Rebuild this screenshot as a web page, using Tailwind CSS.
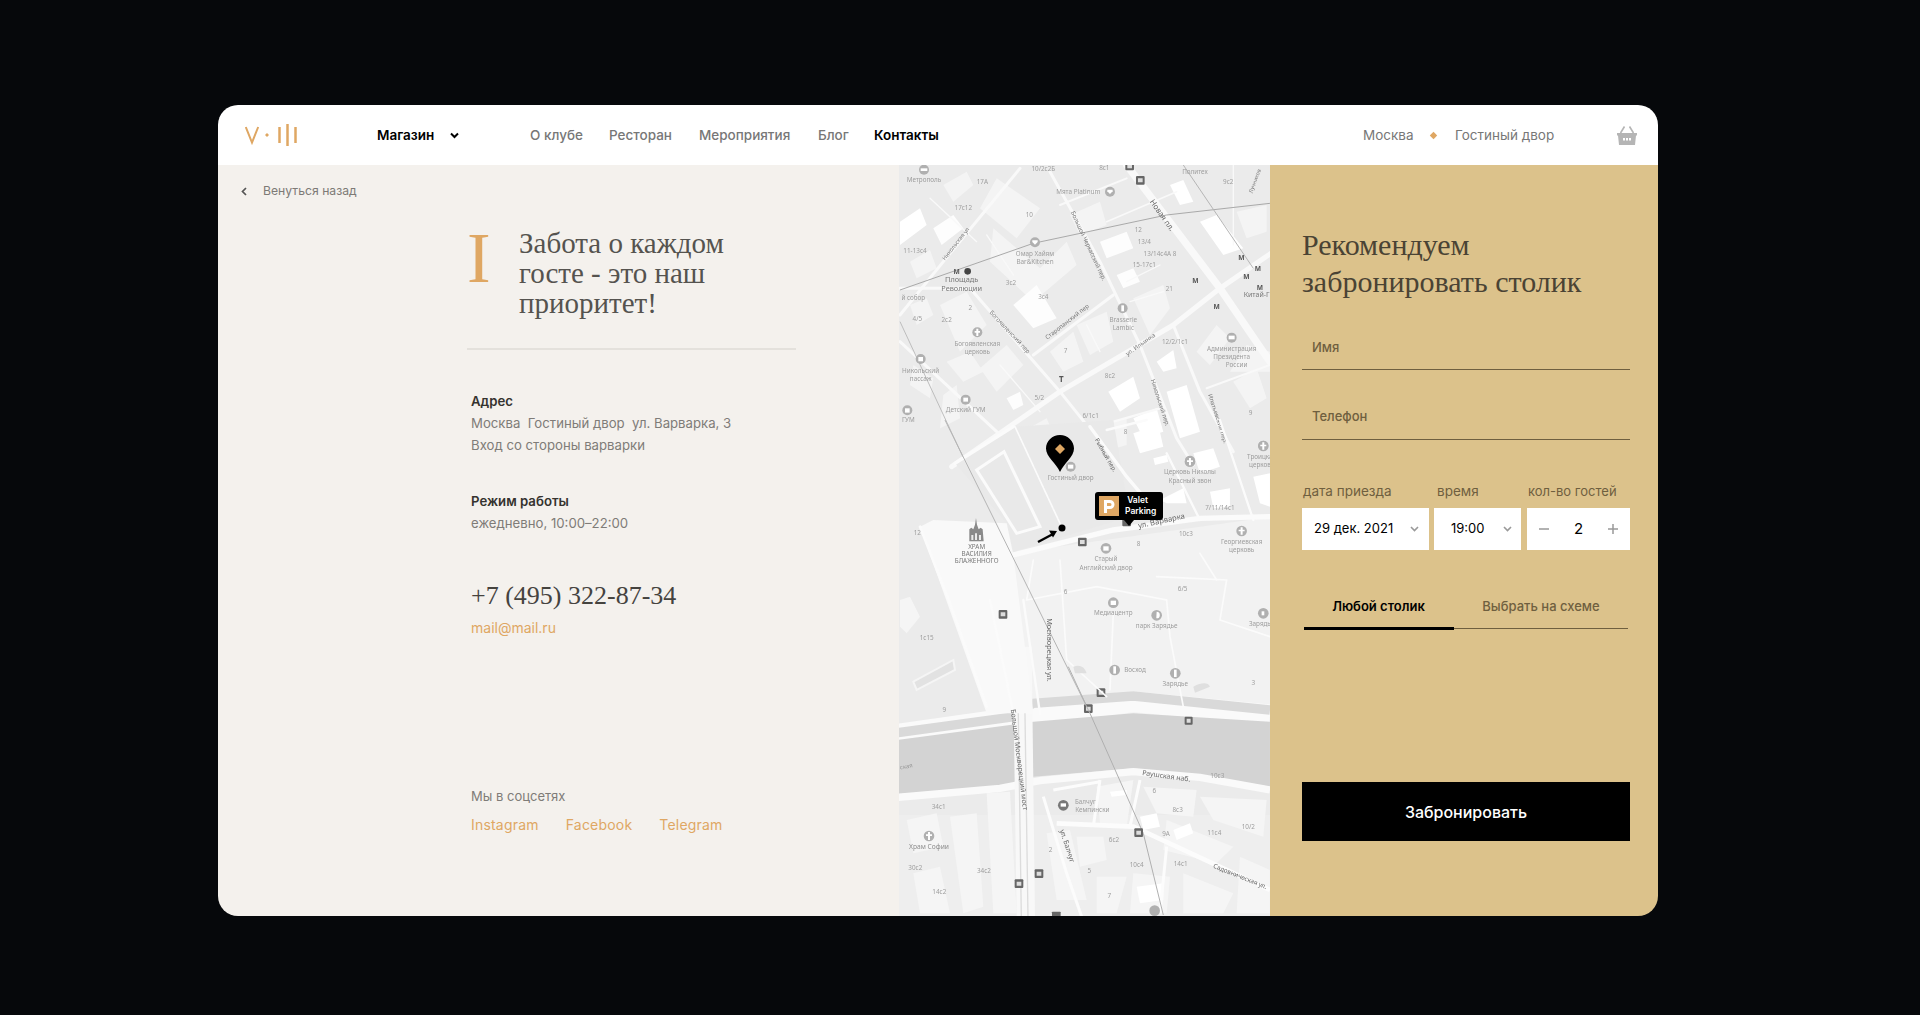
<!DOCTYPE html>
<html lang="ru">
<head>
    <meta charset="UTF-8">
    <meta name="viewport" content="width=device-width, initial-scale=1.0">
    <title>Контакты</title>
    <script src="https://cdn.jsdelivr.net/npm/@tailwindcss/browser@4"></script>
</head>
<body class="bg-[#06080b] min-h-screen overflow-hidden font-['Inter',sans-serif]">
    <div class="w-[1440px] h-[811px] mt-[105px] ml-[218px] rounded-[20px] overflow-hidden flex flex-col">

        <!-- header -->
        <header class="h-[60px] bg-white flex items-center text-[13.5px] text-[#777]">
            <svg class="ml-[27px] w-[54px] h-[22px]" viewBox="0 0 54 22" fill="none" stroke="#dfa763">
                <path d="M.8 3L7 18.500 13.200 3" stroke-width="2"/>
                <path d="M22 9l2 2-2 2-2-2z" fill="#dfa763" stroke="none"/>
                <path d="M34.500 3v16M42.500 0v22M50.500 3v16" stroke-width="2.500"/>
            </svg>
            <a class="ml-[78px] w-[59px] font-semibold text-black whitespace-nowrap">Магазин</a>
            <svg class="ml-[14px] w-[9px] h-[7px]" viewBox="0 0 9 7" fill="none" stroke="#000" stroke-width="2"><path d="M1 1.500l3.500 3.500L8 1.500"/></svg>
            <nav class="ml-[71px] flex gap-[26px] font-medium">
                <a class="w-[53px] whitespace-nowrap">О клубе</a>
                <a class="w-[64px] whitespace-nowrap">Ресторан</a>
                <a class="w-[93px] whitespace-nowrap">Мероприятия</a>
                <a class="w-[30px] whitespace-nowrap">Блог</a>
                <a class="w-[64px] whitespace-nowrap font-semibold text-black">Контакты</a>
            </nav>
            <span class="ml-[425px] w-[49px]">Москва</span>
            <span class="ml-[18px] w-[7px] h-[7px] rotate-45 scale-75 bg-[#dfa763]"></span>
            <span class="ml-[18px] w-[97px] whitespace-nowrap">Гостиный двор</span>
            <svg class="ml-[65px] w-[20px] h-[19px]" viewBox="0 0 20 19" fill="#b5b5b5">
                <path d="M0 7h20v2.500h-1L18 19H2L1 9.500H0z"/>
                <path d="M3.500 7L7.500 .5M16.500 7L12.500 .5" stroke="#b5b5b5" stroke-width="1.600" fill="none"/>
                <path d="M6 12h2v2.500H6zM9 12h2v2.500H9zM12 12h2v2.500h-2z" fill="#fff"/>
            </svg>
        </header>

        <div class="flex-1 flex min-h-0">
            <!-- contacts column -->
            <section class="w-[681px] shrink-0 bg-[#f4f1ed] relative">
                <a class="absolute left-[23px] top-[17px] flex items-center text-[12.2px] text-[#7d7a76]">
                    <svg class="w-[6px] h-[9px] mr-[16px]" viewBox="0 0 6 9" fill="none" stroke="#555" stroke-width="1.700"><path d="M5 1L1.500 4.500 5 8"/></svg>
                    Венуться назад
                </a>

                <div class="ml-[249px] w-[329px] pt-[63px]">
                    <div class="flex h-[122px] border-b-2 border-[#e4e1dc]">
                        <span class="w-[52px] font-['Liberation_Serif',serif] text-[71px] leading-[60px] text-[#dfa763]">I</span>
                        <h1 class="font-['Liberation_Serif',serif] text-[29px] leading-[30px] text-[#55534f]">Забота о каждом<br>госте - это наш<br>приоритет!</h1>
                    </div>
                    <div class="ml-[4px] pt-[40px] text-[13.2px] leading-[22px] text-[#7f7c78]">
                        <h3 class="font-semibold text-[#35332f]">Адрес</h3>
                        <p>Москва&nbsp; Гостиный двор&nbsp; ул. Варварка, 3</p>
                        <p>Вход со стороны варварки</p>
                        <h3 class="mt-[34px] font-semibold text-[#35332f]">Режим работы</h3>
                        <p>ежедневно, 10:00–22:00</p>
                        <p class="mt-[45px] font-['Liberation_Serif',serif] text-[26px] leading-[34px] text-[#45433f]">+7 (495) 322-87-34</p>
                        <a class="block mt-[4px] text-[14px] text-[#dfa763]">mail@mail.ru</a>
                    </div>
                </div>

                <div class="absolute left-[253px] top-[622px] text-[13px] text-[#7f7c78]">
                    <p>Мы в соцсетях</p>
                    <div class="mt-[7px] flex gap-[27px] text-[14px] tracking-[0.2px] text-[#dfa763]">
                        <a>Instagram</a>
                        <a>Facebook</a>
                        <a>Telegram</a>
                    </div>
                </div>
            </section>

            <!-- map -->
            <section class="w-[371px] shrink-0 relative overflow-hidden bg-[#ebebeb]">
                <svg class="absolute inset-0 w-[371px] h-[751px] blur-[0.35px]" viewBox="0 0 371 751" font-family="Noto Sans, sans-serif">
                    <!-- light zones -->
                    <path d="M113 388L371 352V560L130 570z" fill="#f2f2f2"/>
                    <path d="M0 650h371v101H0z" fill="#eeeeee"/>

                    <!-- top part, zoom coords -->
                    <g transform="translate(1,0) scale(.3333)">
                        <g fill="#f4f4f4">
                            <path d="M290 40L420 130 350 220 240 130z"/>
                            <path d="M280 190L420 310 500 230 530 300 400 410 270 290z"/>
                            <path d="M340 420L410 360 470 460 400 490z" fill="#fdfdfd"/>
                            <path d="M120 420L200 380 260 480 180 560z"/>
                            <path d="M140 590L210 560 250 620 190 650z"/>
                            <path d="M240 610L320 540 370 600 290 680z"/>
                            <path d="M320 700L360 680 370 720 340 735z" fill="#fdfdfd"/>
                            <path d="M100 190L160 150 190 190 125 240z" fill="#fdfdfd"/>
                            <path d="M30 290L90 255 110 310 50 340z"/>
                            <path d="M600 230L680 200 700 250 620 280z" fill="#fdfdfd"/>
                            <path d="M650 330L700 310 720 350 670 370z" fill="#fdfdfd"/>
                            <path d="M700 400L790 360 810 430 750 510z"/>
                            <path d="M530 480L620 440 640 530 570 570z"/>
                            <path d="M450 560L520 500 550 590 490 620z"/>
                            <path d="M625 680L700 635 720 700 660 740z" fill="#fff"/>
                            <path d="M770 590L820 555 830 610 790 620z" fill="#fff"/>
                            <path d="M800 680L860 660 900 800 840 820z" fill="#fff"/>
                            <path d="M890 560L950 480 990 520 930 600z"/>
                            <path d="M900 170L950 150 1030 250 970 270z" fill="#fff"/>
                            <path d="M810 60L850 45 880 110 840 120z" fill="#fff"/>
                            <path d="M1000 650L1070 610 1100 700 1050 730z"/>
                            <path d="M700 760L770 730 790 800 730 820z" fill="#fff"/>
                            <path d="M590 780L680 760 680 840 610 860z"/>
                            <path d="M0 170L60 130 80 180 0 240z" fill="#fff"/>
                            <path d="M40 600L100 640 90 700 30 660z"/>
                            <path d="M130 60L200 20 220 60 160 110z"/>
                            <path d="M510 150L600 110 620 180 540 210z"/>
                            <path d="M1010 140L1100 120V200L1040 220z"/>
                            <path d="M990 620L1110 620 1110 560 1040 540z"/>
                            <path d="M350 810L440 760 470 830 370 880z"/>
                            <path d="M30 420L80 400 100 450 50 480z"/>
                            <path d="M130 690L170 660 180 760 120 790z"/>
                        </g>
                        <g fill="none" stroke="#f9f9f9" stroke-width="9" stroke-linecap="round" stroke-linejoin="round">
                            <path d="M155 905L480 680 820 480 960 370 1120 260" stroke-width="15"/>
                            <path d="M0 450L130 290 360 10"/>
                            <path d="M0 370L210 370 480 680 600 830"/>
                            <path d="M450 20L600 290 720 540 830 820 880 900"/>
                            <path d="M680 0L960 370 1110 590" stroke-width="22"/>
                            <path d="M400 570L640 390"/>
                            <path d="M0 530L290 800"/>
                            <path d="M820 480L900 680 1000 860"/>
                            <path d="M480 120L680 40" stroke-width="6"/>
                            <path d="M570 790L780 730" stroke-width="7"/>
                            <path d="M920 670L1110 600" stroke-width="6"/>
                            <path d="M620 170L830 80" stroke-width="5"/>
                            <path d="M260 210L340 330" stroke-width="4"/>
                            <path d="M680 350L780 300" stroke-width="4"/>
                            <path d="M560 480L600 560" stroke-width="4"/>
                            <path d="M690 410L790 380" stroke-width="4"/>
                            <path d="M90 100L230 230" stroke-width="4"/>
                            <path d="M300 600L420 740" stroke-width="4"/>
                            <path d="M1000 0V240" stroke-width="4"/>
                        </g>
                        <path d="M0 375L400 235 800 150 1110 115" fill="none" stroke="#a9a9a9" stroke-width="3"/>
                        <path d="M850 0L1060 310" fill="none" stroke="#b5b5b5" stroke-width="3"/>
                        <path d="M0 470L200 900" fill="none" stroke="#bdbdbd" stroke-width="3"/>
                        <g fill="#b0b0b0">
                            <circle cx="72" cy="14" r="15"/><circle cx="630" cy="80" r="15"/><circle cx="405" cy="232" r="15"/>
                            <circle cx="668" cy="430" r="15"/><circle cx="232" cy="502" r="15"/><circle cx="62" cy="582" r="15"/>
                            <circle cx="197" cy="704" r="15"/><circle cx="22" cy="736" r="15"/><circle cx="995" cy="518" r="15"/>
                            <circle cx="1090" cy="842" r="15"/><circle cx="870" cy="887" r="15"/>
                        </g>
                        <g fill="#fff">
                            <path d="M62 10h20v8H62z"/><path d="M622 74h16v5l-8 8-8-8z"/><path d="M397 226h16v5l-8 8-8-8z"/>
                            <path d="M664 421h8v18h-8z"/><path d="M229 491h6v22h-6zM224 498h16v5h-16z"/><path d="M55 576h14v13H55z"/>
                            <path d="M190 698h14v12h-14z"/><path d="M15 730h14v13H15z"/><path d="M986 512h18v11h-18z"/>
                            <path d="M1087 831h6v22h-6zM1082 838h16v5h-16z"/><path d="M867 876h6v22h-6zM862 883h16v5h-16z"/>
                        </g>
                        <g fill="#666"><rect x="708" y="33" width="26" height="26" rx="3"/><rect x="676" y="-8" width="26" height="24" rx="3"/></g>
                        <path d="M714 40h14v12h-14zM682 -2h14v12h-14z" fill="#ddd"/>
                        <g fill="#555" font-size="20" font-weight="700" text-anchor="middle">
                            <text x="170" y="326">М</text><text x="886" y="353">М</text><text x="1024" y="284">М</text>
                            <text x="1074" y="317">М</text><text x="1039" y="342">М</text><text x="1080" y="374">М</text>
                            <text x="950" y="433">М</text><text x="484" y="652" font-size="24">Т</text>
                        </g>
                        <circle cx="203" cy="319" r="10" fill="#444"/>
                        <g fill="#9d9d9d" font-size="19" text-anchor="middle">
                            <text x="72" y="51">Метрополь</text><text x="247" y="58">17А</text><text x="430" y="18">10/2с2Б</text>
                            <text x="613" y="16">8с1</text><text x="535" y="88">Мята Platinum</text><text x="885" y="28">Политех</text>
                            <text x="985" y="58">9с2</text><text x="190" y="134">17с12</text><text x="388" y="156">10</text>
                            <text x="45" y="263">11-13с4</text><text x="715" y="201">12</text><text x="733" y="236">13/4</text>
                            <text x="780" y="273">13/14с4А 8</text><text x="733" y="306">15-17с1</text>
                            <text x="405" y="273">Омар Хайям</text><text x="405" y="297">Bar&amp;Kitchen</text>
                            <text x="333" y="359">3с2</text><text x="430" y="402">3с4</text><text x="808" y="379">21</text>
                            <text x="670" y="470">Brasserie</text><text x="670" y="494">Lambic</text>
                            <text x="211" y="436">2</text><text x="52" y="467">4/5</text><text x="140" y="472">2с2</text>
                            <text x="40" y="404">й собор</text><text x="232" y="543">Богоявленская</text><text x="232" y="568">церковь</text>
                            <text x="497" y="563">7</text><text x="825" y="536">12/2/1с1</text>
                            <text x="995" y="558">Администрация</text><text x="995" y="583">Президента</text><text x="1010" y="607">России</text>
                            <text x="62" y="623">Никольский</text><text x="62" y="647">пассаж</text><text x="630" y="640">8с2</text>
                            <text x="418" y="706">5/2</text><text x="572" y="758">6/1с1</text><text x="677" y="808">8</text>
                            <text x="1052" y="750">9</text><text x="197" y="742">Детский ГУМ</text><text x="25" y="772">ГУМ</text>
                        </g>
                        <g fill="#777" font-size="19" text-anchor="middle">
                            <text x="185" y="351" font-size="22">Площадь</text><text x="185" y="377" font-size="22">Революции</text>
                            <text x="1070" y="396" font-size="21">Китай-Г</text>
                            <text transform="translate(780,155) rotate(55)" font-size="23" fill="#666">Новая пл.</text>
                            <text transform="translate(560,245) rotate(65)" font-size="18">Большой Черкасский пер.</text>
                            <text transform="translate(172,240) rotate(-52)" font-size="17">Никольская ул</text>
                            <text transform="translate(325,505) rotate(47)" font-size="18">Богоявленский пер</text>
                            <text transform="translate(505,475) rotate(-38)" font-size="18">Старопанский пер</text>
                            <text transform="translate(725,543) rotate(-35)" font-size="18">ул. Ильинка</text>
                            <text transform="translate(775,715) rotate(72)" font-size="18">Никольский пер.</text>
                            <text transform="translate(948,763) rotate(72)" font-size="18">Ипатьевский пер.</text>
                            <text transform="translate(1070,50) rotate(-70)" font-size="16">Лучников</text>
                        </g>
                    </g>

                    <!-- river and embankment, zoom coords -->
                    <g transform="translate(1,495) scale(.3333)">
                        <path d="M-6 222L330 175 700 125 1110 165" fill="none" stroke="#fafafa" stroke-width="62"/>
                        <path d="M-6 218L330 172 400 130 700 108 1110 150" fill="none" stroke="#d9d9d9" stroke-width="28"/>
                        <path d="M-6 240L330 195 400 185 700 160 1110 185V380L900 345 700 325 400 350 300 380-6 402z" fill="#d3d3d3"/>
                        <path d="M-6 412L300 385 420 362 700 335 900 352 1110 390" fill="none" stroke="#fafafa" stroke-width="22"/>
                        <g fill="#f5f5f5">
                            <path d="M150 470L230 460 250 740 190 760z"/>
                            <path d="M20 480L110 460 130 560 40 580z"/>
                            <path d="M40 640L120 620 150 760H60z"/>
                            <path d="M260 400L330 395 350 760H280z"/>
                            <path d="M440 520L510 510 560 720H470z"/>
                            <path d="M590 380L700 360 680 500 600 490z"/>
                            <path d="M730 380L890 390 880 470 770 460z"/>
                            <path d="M800 480L1000 560 950 610 790 570z"/>
                            <path d="M900 410L1100 420 1090 530 940 480z"/>
                            <path d="M530 530L610 530 620 600 540 620z"/>
                            <path d="M590 650L680 650 650 760H590z"/>
                            <path d="M700 640L810 650 800 760H690z"/>
                            <path d="M850 640L1000 700 970 760H850z"/>
                            <path d="M1020 590L1110 630V760H1010z"/>
                        </g>
                        <path d="M720 470L770 460 780 500 730 510zM820 510L870 490 880 520 830 540zM710 680L790 670 790 720 720 730zM630 395L680 390 680 405 635 410z" fill="#fff"/>
                        <g fill="none" stroke="#fcfcfc" stroke-width="9">
                            <path d="M430 410L500 640 545 770"/>
                            <path d="M470 490L700 500 1110 690" stroke-width="14"/>
                            <path d="M600 360L580 500"/><path d="M720 360L690 500"/>
                            <path d="M800 560L780 760"/><path d="M460 390L600 365"/>
                        </g>
                        <path d="M338 -40L350 770H405L395 -40z" fill="#f8f8f8"/>
                        <path d="M352 -40L364 770M372 -40L384 770" stroke="#dcdcdc" stroke-width="4" fill="none"/>
                        <path d="M505 20L570 160 730 520 790 765" fill="none" stroke="#b0b0b0" stroke-width="3"/>
                        <circle cx="87" cy="528" r="16" fill="#b0b0b0"/><path d="M84 516h6v24h-6zM78 523h18v5H78z" fill="#fff"/>
                        <circle cx="490" cy="436" r="16" fill="#777"/><path d="M482 430h16v10h-16z" fill="#fff"/>
                        <circle cx="764" cy="752" r="16" fill="#b0b0b0"/>
                        <g fill="#666"><rect x="552" y="133" width="26" height="26" rx="3"/><rect x="590" y="85" width="26" height="26" rx="3"/>
                            <rect x="854" y="170" width="24" height="24" rx="3"/><rect x="703" y="505" width="26" height="26" rx="3"/>
                            <rect x="404" y="628" width="26" height="26" rx="3"/><rect x="344" y="658" width="26" height="26" rx="3"/>
                            <rect x="456" y="755" width="26" height="15" rx="2"/></g>
                        <path d="M558 140h14v12h-14zM596 92h14v12h-14zM860 176h12v12h-12zM709 512h14v12h-14zM410 635h14v12h-14zM350 665h14v12h-14z" fill="#ddd"/>
                        <g fill="#9d9d9d" font-size="19" text-anchor="middle">
                            <text x="952" y="355">10с3</text><text x="116" y="446">34с1</text><text x="46" y="630">30с2</text>
                            <text x="252" y="640">34с2</text><text x="118" y="702">14с2</text><text x="452" y="577">2</text>
                            <text x="763" y="399">6</text><text x="833" y="455">8с3</text><text x="798" y="529">9А</text>
                            <text x="943" y="525">11с4</text><text x="1045" y="508">10/2</text><text x="642" y="545">6с2</text>
                            <text x="568" y="638">5</text><text x="710" y="620">10с4</text><text x="842" y="619">14с1</text><text x="628" y="715">7</text>
                            <text x="556" y="433">Балчуг</text><text x="577" y="457">Кемпински</text>
                            <text x="87" y="567" fill="#8d8d8d" font-size="20">Храм Софии</text>
                        </g>
                        <g fill="#666" font-size="21" text-anchor="middle">
                            <text transform="translate(798,355) rotate(8)">Раушская наб.</text>
                            <text transform="translate(495,560) rotate(72)">ул. Балчуг</text>
                            <text transform="translate(1018,655) rotate(22)" font-size="19">Садовническая ул.</text>
                            <text transform="translate(20,325) rotate(-10)" font-size="18" fill="#999">ская</text>
                        </g>
                    </g>

                    <!-- centre part, zoom coords -->
                    <g transform="translate(1,255) scale(.3333)">
                        <path d="M165 130L345 20 640 0 690 290 340 395 320 310z" fill="#e9e9e9"/>
                        <path d="M100 300L320 310 340 405 400 880H260L60 320z" fill="#f9f9f9"/>
                        <path d="M230 150L312 95 420 320 350 340z" fill="none" stroke="#fbfbfb" stroke-width="9"/>
                        <g fill="none" stroke="#fbfbfb" stroke-width="10" stroke-linecap="round">
                            <path d="M340 405L640 330 900 295 1110 290" stroke-width="16"/>
                            <path d="M165 130L340 20"/>
                            <path d="M345 20L480 310" stroke-width="5" stroke-dasharray="30 4"/>
                            <path d="M570 20L680 170 790 300"/>
                            <path d="M620 30L740 0" stroke-width="7"/>
                            <path d="M800 100L900 300" stroke-width="7"/>
                            <path d="M960 0L1060 300" stroke-width="7"/>
                            <path d="M60 320L150 550 260 860" stroke-width="8"/>
                            <path d="M270 540L340 880" stroke-width="7"/>
                            <path d="M370 540L420 880" stroke-width="7"/>
                            <path d="M400 420L380 540 590 500 800 540 810 650 850 860" stroke-width="5"/>
                            <path d="M480 420L500 720 620 830" stroke-width="5"/>
                            <path d="M640 580L630 810" stroke-width="5"/>
                            <path d="M770 470L980 480 960 600 1110 650" stroke-width="5"/>
                            <path d="M900 400L950 480" stroke-width="5"/>
                        </g>
                        <g fill="#fff">
                            <path d="M700 40L775 15 790 80 720 100z"/><path d="M760 115L800 105 805 125 765 135z"/>
                            <path d="M880 100L940 85 960 140 900 160z"/><path d="M930 215L990 205 990 260 940 265z"/>
                            <path d="M780 240L850 205 860 250 800 250z"/><path d="M1060 170L1110 160V260L1080 250z"/>
                        </g>
                        <path d="M40 785L160 720 165 750 50 810z" fill="#e2e2e2" stroke="#f5f5f5" stroke-width="6"/>
                        <path d="M0 540L30 530 60 590 20 640 0 620z" fill="#f5f5f5"/>
                        <path d="M520 740q30-10 40 20h-35zM880 800q40-20 50 0l-45 18z" fill="#dfdfdf"/>
                        <path d="M135 0L570 880" stroke="#b4b4b4" stroke-width="3" fill="none"/>
                        <g fill="#b0b0b0">
                            <circle cx="512" cy="140" r="15"/><circle cx="870" cy="125" r="16"/><circle cx="1025" cy="333" r="16"/>
                            <circle cx="1090" cy="78" r="16"/><circle cx="618" cy="385" r="16"/><circle cx="640" cy="548" r="16"/>
                            <circle cx="770" cy="586" r="16"/><circle cx="1090" cy="580" r="16"/><circle cx="644" cy="750" r="16"/>
                            <circle cx="826" cy="760" r="16"/>
                        </g>
                        <g fill="#fff">
                            <path d="M504 134h16v12h-16z"/><path d="M867 114h6v22h-6zM861 121h18v5h-18z"/><path d="M1022 322h6v22h-6zM1016 329h18v5h-18z"/>
                            <path d="M1087 67h6v22h-6zM1081 74h18v5h-18z"/><path d="M610 379h16v13h-16z"/><path d="M632 542h16v13h-16z"/>
                            <path d="M770 575a10 10 0 1 1-1 20z"/><path d="M1085 574h8v12h-8z"/><path d="M640 739h8v22h-8z"/><path d="M822 749h8v22h-8z"/>
                        </g>
                        <g fill="#666">
                            <rect x="667" y="297" width="26" height="22" rx="3"/><rect x="534" y="353" width="26" height="26" rx="3"/>
                            <rect x="296" y="570" width="26" height="26" rx="3"/>
                        </g>
                        <path d="M540 360h14v12h-14zM302 577h14v12h-14z" fill="#ddd"/>
                        <g fill="#9d9d9d" font-size="19" text-anchor="middle">
                            <text x="512" y="179">Гостиный двор</text><text x="870" y="163">Церковь Николы</text><text x="870" y="188">Красный звон</text>
                            <text x="1085" y="116">Троицкая</text><text x="1085" y="141">церковь</text><text x="960" y="269">7/11/14с1</text>
                            <text x="858" y="349">10с3</text><text x="716" y="378">8</text><text x="1025" y="373">Георгиевская</text><text x="1025" y="397">церковь</text>
                            <text x="618" y="424">Старый</text><text x="618" y="449">Английский двор</text><text x="52" y="346">12</text>
                            <text x="497" y="521">6</text><text x="848" y="514">6/5</text><text x="640" y="586">Медиацентр</text>
                            <text x="770" y="625">парк Зарядье</text><text x="1085" y="618">Зарядье</text><text x="80" y="661">1с15</text>
                            <text x="705" y="757">Восход</text><text x="826" y="797">Зарядье</text><text x="1060" y="794">3</text><text x="133" y="876">9</text>
                            <text x="230" y="386" fill="#777">ХРАМ</text><text x="230" y="408" fill="#777">ВАСИЛИЯ</text><text x="230" y="430" fill="#777">БЛАЖЕННОГО</text>
                        </g>
                        <g fill="#666" font-size="21" text-anchor="middle">
                            <text transform="translate(786,310) rotate(-12)" font-size="23">ул. Варварка</text>
                            <text transform="translate(440,690) rotate(90)" font-size="22">Москворецкая ул.</text>
                            <text transform="translate(612,108) rotate(60)" font-size="18">Рыбный пер.</text>
                        </g>
                        <!-- st basil -->
                        <path d="M208 364v-36l6-5 6 5 5-14 3-20 3 20 5 14 6-5 6 5 3 36z" fill="#8a8a8a"/>
                        <path d="M214 345h6v15h-6zM225 340h6v20h-6zM237 345h6v15h-6z" fill="#ececec"/>
                    </g>

                    <!-- bridge label sits over both parts -->
                    <text transform="translate(118,595) rotate(83)" fill="#666" font-size="7" text-anchor="middle">Большой Москворецкий мост</text>
                </svg>

                <!-- pin -->
                <svg class="absolute left-[147px] top-[270px] w-[28px] h-[37px]" viewBox="0 0 28 37">
                    <path d="M14 37C10 28 0 22 0 13.500 0 6 6.300 0 14 0s14 6 14 13.500C28 22 18 28 14 37z" fill="#000"/>
                    <path d="M14 9l5 5-5 5-5-5z" fill="#dfa763"/>
                </svg>

                <!-- parking tooltip -->
                <div class="absolute left-[196px] top-[327px] w-[68px] h-[28px] rounded-[3px] bg-black flex items-center text-white text-[8.5px] leading-[11px] font-semibold">
                    <svg class="ml-[4px] w-[20px] h-[20px]" viewBox="0 0 20 20">
                        <rect width="20" height="20" fill="#dfa763"/>
                        <path d="M5 4h6a4.500 4.500 0 0 1 0 9H8v4H5zM8 7v3h3a1.500 1.500 0 0 0 0-3z" fill="#fff" fill-rule="evenodd"/>
                    </svg>
                    <span class="ml-[6px] whitespace-nowrap">&nbsp;Valet<br>Parking</span>
                    <span class="absolute left-[29px] top-[28px] border-x-[5px] border-t-[6px] border-x-transparent border-t-black"></span>
                </div>

                <!-- entrance marker -->
                <svg class="absolute left-[136px] top-[355px] w-[34px] h-[26px]" viewBox="0 0 34 26">
                    <circle cx="27" cy="8" r="3.500" fill="#000"/>
                    <path d="M3 22l15-8" stroke="#000" stroke-width="2.500"/>
                    <path d="M22 11l-8-.5 4 7z" fill="#000"/>
                </svg>
            </section>

            <!-- booking column -->
            <section class="w-[388px] shrink-0 bg-[#dcc28b] pl-[32px] pr-[28px] pt-[61px] text-[#6f5f3f]">
                <h2 class="font-['Liberation_Serif',serif] text-[30px] leading-[37px] text-[#4a4334] whitespace-nowrap">Рекомендуем<br>забронировать столик</h2>
                <label class="block mt-[35px] h-[35px] pl-[10px] border-b border-[#6f5f3f] text-[13px] font-medium leading-[24px]">Имя</label>
                <label class="block mt-[34px] h-[36px] pl-[10px] border-b border-[#6f5f3f] text-[13px] font-medium leading-[24px]">Телефон</label>

                <div class="mt-[42px] flex gap-[5px] text-[13.5px]">
                    <div class="w-[127px] shrink-0">
                        <p class="pl-[1px] leading-[18px] whitespace-nowrap">дата приезда</p>
                        <div class="mt-[8px] h-[42px] bg-white flex items-center justify-between pl-[12px] pr-[10px] text-[13px] text-black">
                            <span>29 дек. 2021</span>
                            <svg class="w-[9px] h-[6px]" viewBox="0 0 9 6" fill="none" stroke="#999" stroke-width="1.600"><path d="M1 1l3.500 3.500L8 1"/></svg>
                        </div>
                    </div>
                    <div class="w-[87px] shrink-0">
                        <p class="pl-[3px] leading-[18px]">время</p>
                        <div class="mt-[8px] h-[42px] bg-white flex items-center justify-between pl-[17px] pr-[9px] text-[13px] text-black">
                            <span>19:00</span>
                            <svg class="w-[9px] h-[6px]" viewBox="0 0 9 6" fill="none" stroke="#999" stroke-width="1.600"><path d="M1 1l3.500 3.500L8 1"/></svg>
                        </div>
                    </div>
                    <div class="w-[103px] shrink-0 ml-[1px]">
                        <p class="pl-[1px] leading-[18px] whitespace-nowrap text-[13px]">кол-во гостей</p>
                        <div class="mt-[8px] h-[42px] bg-white flex items-center justify-between px-[12px] text-black text-[15px]">
                            <svg class="w-[10px] h-[10px]" viewBox="0 0 10 10" stroke="#999" stroke-width="1.500"><path d="M0 5h10"/></svg>
                            <span>2</span>
                            <svg class="w-[10px] h-[10px]" viewBox="0 0 10 10" stroke="#999" stroke-width="1.500"><path d="M0 5h10M5 0v10"/></svg>
                        </div>
                    </div>
                </div>

                <div class="mt-[47px] mx-[2px] flex h-[32px] border-b border-[#6f5f3f] text-[13px] font-medium">
                    <div class="w-[150px] h-[33px] border-b-[3px] border-black text-center text-black font-semibold pr-[1px]">Любой столик</div>
                    <div class="flex-1 text-center">Выбрать на схеме</div>
                </div>

                <button class="block mt-[153px] w-[328px] h-[59px] bg-black text-white text-[16px] font-medium">Забронировать</button>
            </section>
        </div>
    </div>
</body>
</html>
